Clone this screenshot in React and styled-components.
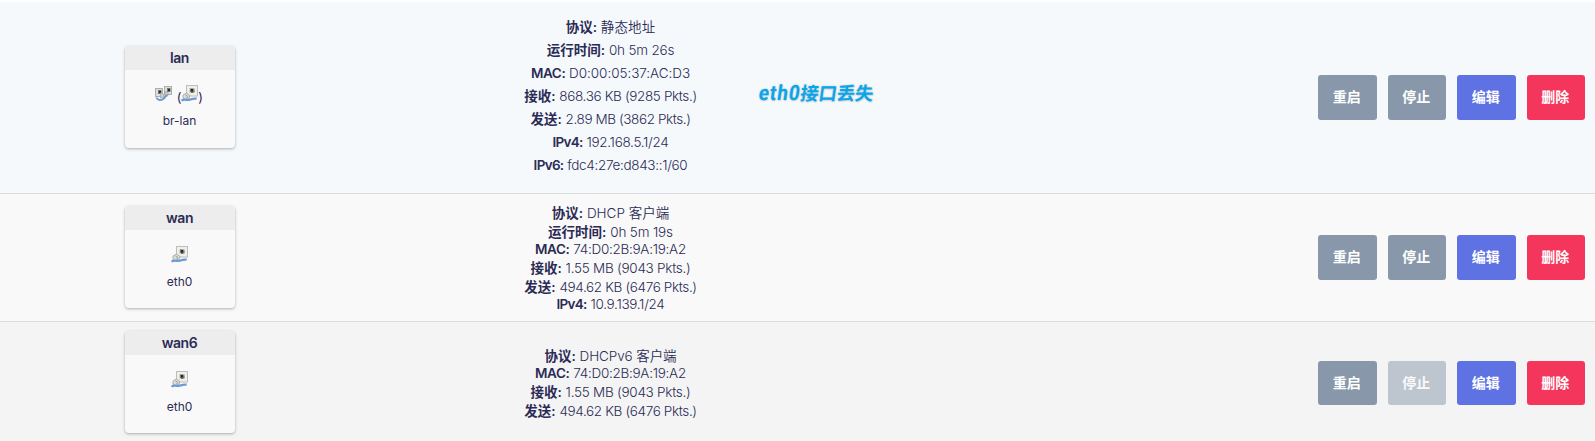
import React from "react";
import styled, { createGlobalStyle } from "styled-components";

const GlobalStyle = createGlobalStyle`
  * { box-sizing: border-box; }
  body {
    margin: 0;
    background: #fff;
    color: #2b2b55;
    font-family: Inter, "Noto Sans CJK SC", sans-serif;
    overflow: hidden;
  }
`;

const Table = styled.main`
  width: 100%;
  height: 441px;
  padding-top: 2px;
  overflow: hidden;
`;

const Row = styled.section`
  position: relative;
  display: grid;
  grid-template-columns: 360px 501px 1fr;
  align-items: center;
  height: ${(p) => p.$height}px;
  background: ${(p) => p.$background};
  border-bottom: ${(p) => (p.$last ? "0" : "1px solid #dadddf")};
`;

const Card = styled.div`
  justify-self: center;
  width: 110px;
  height: 102px;
  margin-top: ${(p) => p.$offset}px;
  border-radius: 4px;
  overflow: hidden;
  background: #f9f9f9;
  box-shadow: 0 1px 3px rgba(0, 0, 0, 0.3);
  text-align: center;
`;

const CardHeader = styled.div`
  height: 24px;
  padding-right: 1px;
  background: #ededed;
  font-size: 14px;
  font-weight: 600;
  line-height: 23px;
  letter-spacing: -0.4px;
`;

const Devices = styled.div`
  display: flex;
  justify-content: center;
  align-items: flex-start;
  height: ${(p) => (p.$bridge ? 33 : 34)}px;
  padding: ${(p) => (p.$bridge ? 15 : 16)}px 2px 0 0;
`;

const Member = styled.span`
  display: flex;
  margin-left: 3.5px;
`;

const Paren = styled.span`
  width: 4.5px;
  padding-top: 5px;
  font-size: 13px;
  line-height: 15px;
`;

const DeviceName = styled.div`
  margin-top: 10px;
  padding-right: 1px;
  font-size: 12px;
  line-height: 16px;
`;

const Details = styled.div`
  display: flex;
  flex-direction: column;
  align-items: center;
  margin-top: ${(p) => p.$offset}px;
`;

const Line = styled.div`
  display: flex;
  justify-content: center;
  gap: 3.8px;
  height: ${(p) => p.$height}px;
  line-height: ${(p) => (p.$height === 17 ? 15 : p.$height)}px;
  font-size: 13.5px;
  white-space: nowrap;
`;

const Label = styled.strong`
  font-weight: 600;
  letter-spacing: ${(p) => p.$track || 0}px;
`;

const Value = styled.span`
  font-weight: ${(p) => (p.$cjk ? 350 : 300)};
  letter-spacing: ${(p) => p.$track || 0}px;
`;

const Actions = styled.div`
  display: flex;
  justify-content: flex-end;
  gap: 11px;
  padding-right: 10px;
  margin-top: ${(p) => p.$offset}px;
`;

const Button = styled.button`
  width: 58.5px;
  height: ${(p) => p.$height}px;
  padding: 0 1px 3px 0;
  border: 0;
  border-radius: 3px;
  background: ${(p) => p.$color};
  opacity: ${(p) => (p.disabled ? 0.5 : 1)};
  color: #fff;
  font: 600 14px/1 "Noto Sans CJK SC", sans-serif;
`;

const Note = styled.div`
  position: absolute;
  left: 759px;
  top: 77px;
  display: flex;
  align-items: baseline;
  color: #0aa5ea;
  font: 700 18.3px/26px "Noto Sans CJK SC", sans-serif;
  white-space: nowrap;
  transform: skewX(-8deg);
  text-shadow: 0 0 2px #c3cbd0, 1px 1px 1px #d5dbdf;
`;

const NoteLatin = styled.span`
  display: inline-block;
  width: 41.5px;
  font-family: Roboto, sans-serif;
  font-size: 21px;
  letter-spacing: 1.2px;
  transform: scaleX(0.89);
  transform-origin: left;
`;

const EthernetIcon = () => (
  <svg width="17" height="17" viewBox="0 0 17 17">
    <rect x="5.5" y=".5" width="11" height="10.5" fill="#efefec" stroke="#bdbebb" />
    <path d="M8 3h6v5H8z" fill="#d3d4cf" />
    <path d="M9 3.5h3.5v1h1V7h-1v1H10V7H9z" fill="#777869" />
    <rect x="10" y="4" width="2" height="2.5" fill="#242824" />
    <path d="M2 10l3.5-2L9 10.5 8 13l-4 1.5-2-1.5z" fill="#dcddd9" stroke="#a5a8a5" strokeWidth=".9" />
    <path d="M4.5 10l2 1-.7 2" fill="none" stroke="#999c99" strokeWidth=".9" />
    <path d="M.5 15.8C2.5 13.5 6 15.6 8.7 14.7c3-1 4.8-1.6 7-1" fill="none" stroke="#6e9bd6" strokeWidth="2.3" />
  </svg>
);

const BridgeIcon = () => (
  <svg width="18" height="17" viewBox="0 0 18 17">
    <rect x="9.5" y="1.5" width="7" height="8" fill="#dededa" stroke="#adafab" />
    <rect x=".5" y="3.5" width="7" height="8" fill="#dededa" stroke="#adafab" />
    <path d="M12 3h3.5v4H12zM3 5h3.5v4H3z" fill="#77786d" />
    <path d="M13 4h2v2h-2zM4 6h2v2H4z" fill="#292e29" />
    <path d="M5.5 8l3 1v3l-3 1zM10 6.5l3 1v3l-3 1z" fill="#d1d2ce" stroke="#a3a6a3" strokeWidth=".8" />
    <path d="M1.5 12.5c1 2.8 5 3.2 7 1.3s2-3.3 4-3.8" fill="none" stroke="#6e9bd6" strokeWidth="2" />
  </svg>
);

const interfaces = [
  {
    name: "lan", device: "br-lan", bridge: true, height: 192, background: "#f5f9fc",
    cardOffset: -1, detailsOffset: -3, actionsOffset: 0, buttonHeight: 45,
    lines: [
      ["协议:", "静态地址", 23, 0, 0.1, true], ["运行时间:", "0h 5m 26s", 23, 0, -0.2],
      ["MAC:", "D0:00:05:37:AC:D3", 23, -0.4, -0.05], ["接收:", "868.36 KB (9285 Pkts.)", 23, 0, -0.36],
      ["发送:", "2.89 MB (3862 Pkts.)", 23, 0, -0.4], ["IPv4:", "192.168.5.1/24", 23, -0.7, -0.3],
      ["IPv6:", "fdc4:27e:d843::1/60", 23, -0.7, -0.32],
    ],
  },
  {
    name: "wan", device: "eth0", height: 128, background: "#f9f9f9",
    cardOffset: -1, detailsOffset: 3, actionsOffset: 0, buttonHeight: 45,
    lines: [
      ["协议:", "DHCP 客户端", 19, 0, 0, true], ["运行时间:", "0h 5m 19s", 19, 0, -0.15],
      ["MAC:", "74:D0:2B:9A:19:A2", 17, -0.4, -0.28], ["接收:", "1.55 MB (9043 Pkts.)", 19, 0, -0.26],
      ["发送:", "494.62 KB (6476 Pkts.)", 19, 0, -0.36], ["IPv4:", "10.9.139.1/24", 17, -0.7, -0.3],
    ],
  },
  {
    name: "wan6", device: "eth0", height: 127, background: "#f4f4f4",
    stopped: true, cardOffset: -7, detailsOffset: -3, actionsOffset: -5, buttonHeight: 44,
    lines: [
      ["协议:", "DHCPv6 客户端", 19, 0, -0.1, true], ["MAC:", "74:D0:2B:9A:19:A2", 17, -0.4, -0.28],
      ["接收:", "1.55 MB (9043 Pkts.)", 19, 0, -0.26], ["发送:", "494.62 KB (6476 Pkts.)", 19, 0, -0.36],
    ],
  },
];

export default function App() {
  return (
    <Table>
      <GlobalStyle />
      {interfaces.map((item, i) => (
        <Row key={item.name} $height={item.height} $background={item.background} $last={i === 2}>
          <Card $offset={item.cardOffset}>
            <CardHeader>{item.name}</CardHeader>
            <Devices $bridge={item.bridge}>
              {item.bridge ? (
                <>
                  <BridgeIcon />
                  <Member><Paren>(</Paren><EthernetIcon /><Paren>)</Paren></Member>
                </>
              ) : <EthernetIcon />}
            </Devices>
            <DeviceName>{item.device}</DeviceName>
          </Card>
          <Details $offset={item.detailsOffset}>
            {item.lines.map(([label, value, height, labelTrack, valueTrack, cjk]) => (
              <Line key={label} $height={height}>
                <Label $track={labelTrack}>{label}</Label>
                <Value $track={valueTrack} $cjk={cjk}>{value}</Value>
              </Line>
            ))}
          </Details>
          <Actions $offset={item.actionsOffset}>
            <Button $color="#8898aa" $height={item.buttonHeight}>重启</Button>
            <Button $color="#8898aa" $height={item.buttonHeight} disabled={item.stopped}>停止</Button>
            <Button $color="#5e72e4" $height={item.buttonHeight}>编辑</Button>
            <Button $color="#f5365c" $height={item.buttonHeight}>删除</Button>
          </Actions>
          {item.bridge && <Note><NoteLatin>eth0</NoteLatin>接口丢失</Note>}
        </Row>
      ))}
    </Table>
  );
}
